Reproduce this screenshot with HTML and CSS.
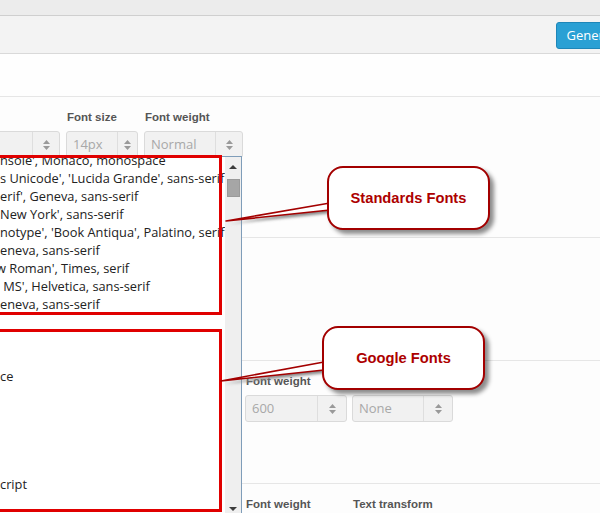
FILE: index.html
```html
<!DOCTYPE html>
<html>
<head>
<meta charset="utf-8">
<link rel="stylesheet" href="styles.css">
</head>
<body>
<div class="page">
  <div class="topbar"></div>
  <div class="toolbar"><button class="btn-primary">Generate</button></div>
  <div class="band"></div>

  <section class="sec sec1">
    <div class="fields fields-top">
      <div class="field f-family">
        <span class="lbl"></span>
        <div class="select"><span class="val"></span><span class="caret"><svg width="7" height="10" viewBox="0 0 7 10"><path d="M3.5 0 L7 4 H0 Z M0 6 H7 L3.5 10 Z" fill="#999"/></svg></span></div>
      </div>
      <div class="field f-size">
        <label class="lbl">Font size</label>
        <div class="select"><span class="val">14px</span><span class="caret narrow"><svg width="7" height="10" viewBox="0 0 7 10"><path d="M3.5 0 L7 4 H0 Z M0 6 H7 L3.5 10 Z" fill="#999"/></svg></span></div>
      </div>
      <div class="field f-weight">
        <label class="lbl">Font weight</label>
        <div class="select"><span class="val">Normal</span><span class="caret"><svg width="7" height="10" viewBox="0 0 7 10"><path d="M3.5 0 L7 4 H0 Z M0 6 H7 L3.5 10 Z" fill="#999"/></svg></span></div>
      </div>
    </div>
  </section>

  <section class="sec sec2"></section>

  <section class="sec sec3">
    <div class="fields fields-right">
      <div class="field f-r1">
        <label class="lbl">Font weight</label>
        <div class="select"><span class="val">600</span><span class="caret wide"><svg width="7" height="10" viewBox="0 0 7 10"><path d="M3.5 0 L7 4 H0 Z M0 6 H7 L3.5 10 Z" fill="#999"/></svg></span></div>
      </div>
      <div class="field f-r2">
        <span class="lbl"></span>
        <div class="select"><span class="val">None</span><span class="caret wide"><svg width="7" height="10" viewBox="0 0 7 10"><path d="M3.5 0 L7 4 H0 Z M0 6 H7 L3.5 10 Z" fill="#999"/></svg></span></div>
      </div>
    </div>
  </section>

  <section class="sec sec4">
    <div class="fields fields-right">
      <div class="field f-r1"><label class="lbl">Font weight</label></div>
      <div class="field f-r2"><label class="lbl">Text transform</label></div>
    </div>
  </section>

  <div class="listbox">
    <ul class="options">
      <li>nsole', Monaco, monospace</li>
      <li>s Unicode', 'Lucida Grande', sans-serif</li>
      <li>erif', Geneva, sans-serif</li>
      <li>New York', sans-serif</li>
      <li>notype', 'Book Antiqua', Palatino, serif</li>
      <li>eneva, sans-serif</li>
      <li class="cut">w Roman', Times, serif</li>
      <li>&nbsp;MS', Helvetica, sans-serif</li>
      <li>eneva, sans-serif</li>
      <li></li>
      <li></li>
      <li></li>
      <li class="cut2">ace</li>
      <li></li>
      <li></li>
      <li></li>
      <li></li>
      <li></li>
      <li>cript</li>
      <li></li>
    </ul>
    <div class="scrollbar">
      <span class="arrow up"></span>
      <span class="thumb"></span>
      <span class="track"></span>
      <span class="arrow down"></span>
    </div>
  </div>

  <div class="redbox box1"></div>
  <div class="redbox box2"></div>

  <svg class="tails" width="600" height="513" viewBox="0 0 600 513">
    <defs>
      <filter id="blur" x="-10%" y="-50%" width="120%" height="200%"><feGaussianBlur stdDeviation="1.5"/></filter>
    </defs>
    <polygon points="229,224 332,206 332,213" fill="#888" filter="url(#blur)"/>
    <polygon points="226,221 330,203 330,210" fill="#fff" stroke="#a30000" stroke-width="1.6" stroke-linejoin="round"/>
    <polygon points="224,384 326,365 326,373" fill="#888" filter="url(#blur)"/>
    <polygon points="221,381 324,362 324,370" fill="#fff" stroke="#a30000" stroke-width="1.6" stroke-linejoin="round"/>
  </svg>

  <div class="callout c1">Standards Fonts</div>
  <div class="callout c2">Google Fonts</div>
</div>
</body>
</html>
```

FILE: styles.css
```css
html, body {
  margin: 0;
  padding: 0;
  overflow: hidden;
}
body {
  width: 600px;
  height: 513px;
  background: #fdfdfd;
  font-family: "Open Sans", "Liberation Sans", sans-serif;
}
.page {
  position: relative;
  width: 600px;
  height: 513px;
  overflow: hidden;
}
.topbar {
  height: 15px;
  background: #ececec;
  border-bottom: 1px solid #cfcfcf;
}
.toolbar {
  height: 37px;
  background: #f3f3f3;
  border-bottom: 1px solid #d9d9d9;
  display: flex;
  justify-content: flex-end;
  align-items: center;
}
.btn-primary {
  height: 27px;
  margin-right: -34px;
  margin-top: 1px;
  padding: 0 10px;
  background: #2aa0d4;
  border: 1px solid #1e86b8;
  border-radius: 3px;
  color: #fff;
  font-family: "Open Sans", sans-serif;
  font-size: 13px;
  white-space: nowrap;
}
.band {
  height: 42px;
  border-bottom: 1px solid #e6e6e6;
  background: #fefefe;
}
.sec {
  border-bottom: 1px solid #e6e6e6;
  padding-top: 13px;
  box-sizing: border-box;
}
.sec1 { height: 141px; }
.sec2 { height: 123px; }
.sec3 { height: 123px; }
.sec4 { height: 60px; border-bottom: none; }

.fields {
  display: flex;
}
.fields-top {
  margin-left: -140px;
  gap: 6px;
}
.fields-right {
  margin-left: 245px;
  gap: 5px;
}
.field {
  display: flex;
  flex-direction: column;
}
.f-family { width: 200px; }
.f-size { width: 72px; }
.f-weight { width: 99px; }
.f-r1 { width: 102px; }
.f-r2 { width: 101px; }

.lbl {
  display: block;
  font-family: "Liberation Sans", Arial, sans-serif;
  font-weight: bold;
  font-size: 11.5px;
  line-height: 14px;
  height: 14px;
  color: #555;
  margin-bottom: 7px;
  padding-left: 1px;
  white-space: nowrap;
}
.select {
  height: 27px;
  box-sizing: border-box;
  border: 1px solid #dadada;
  border-radius: 3px;
  background: #f1f1f1;
  display: flex;
  align-items: stretch;
}
.val {
  flex: 1;
  padding-left: 6px;
  font-size: 13px;
  line-height: 25px;
  color: #a8a8a8;
}
.caret {
  width: 26px;
  border-left: 1px solid #dedede;
  display: flex;
  align-items: center;
  justify-content: center;
}
.caret.narrow { width: 19px; }
.caret.wide { width: 28px; }

.listbox {
  position: absolute;
  left: 0;
  top: 156px;
  width: 241px;
  height: 380px;
  background: #fff;
  border-top: 1px solid #7f9db9;
  border-right: 1px solid #7f9db9;
  overflow: hidden;
  display: flex;
}
.options {
  list-style: none;
  margin: -6px 0 0 0;
  padding: 0;
  flex: 1;
  overflow: hidden;
}
.options li {
  height: 18px;
  line-height: 18px;
  font-size: 12.8px;
  color: #222;
  white-space: nowrap;
}
.options li.cut { text-indent: -4px; }
.options li.cut2 { text-indent: -7px; }

.scrollbar {
  width: 16px;
  background: #efefef;
  display: flex;
  flex-direction: column;
  align-items: center;
}
.arrow {
  width: 0;
  height: 0;
  border-left: 4px solid transparent;
  border-right: 4px solid transparent;
}
.arrow.up {
  border-bottom: 4px solid #3c3c3c;
  margin-top: 8px;
}
.arrow.down {
  border-top: 4px solid #3c3c3c;
  margin-bottom: 26px;
}
.thumb {
  width: 13px;
  height: 18px;
  margin-top: 10px;
  background: #a6a6a6;
  border: 1px solid #9a9a9a;
  box-sizing: border-box;
}
.track { flex: 1; }

.redbox {
  position: absolute;
  left: -10px;
  border: 3.5px solid #e00000;
  box-sizing: border-box;
}
.box1 {
  top: 155px;
  width: 232px;
  height: 160px;
}
.box2 {
  top: 329px;
  width: 232px;
  height: 183px;
}

.tails {
  position: absolute;
  left: 0;
  top: 0;
  pointer-events: none;
}

.callout {
  position: absolute;
  width: 163px;
  height: 64px;
  box-sizing: border-box;
  border: 2px solid #a30000;
  border-radius: 16px;
  background: #fff;
  box-shadow: 4px 4px 4px rgba(0, 0, 0, 0.45);
  display: flex;
  align-items: center;
  justify-content: center;
  font-family: "Liberation Sans", Arial, sans-serif;
  font-weight: bold;
  font-size: 14.7px;
  color: #ad0000;
}
.c1 { left: 327px; top: 166px; }
.c2 { left: 322px; top: 326px; }
```
